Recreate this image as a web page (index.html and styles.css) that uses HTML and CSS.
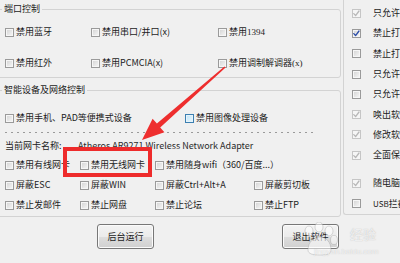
FILE: index.html
```html
<!DOCTYPE html>
<html lang="zh-CN">
<head>
<meta charset="utf-8">
<link rel="stylesheet" href="styles.css">
</head>
<body>
<div class="window">
  <div class="left">
    <fieldset class="group g1">
      <legend>端口控制</legend>
      <div class="grid1">
        <div class="cb"><span class="box"></span>禁用蓝牙</div>
        <div class="cb"><span class="box"></span>禁用串口/并口(x)</div>
        <div class="cb"><span class="box"></span>禁用<span class="serif">1394</span></div>
        <div class="cb"><span class="box"></span>禁用红外</div>
        <div class="cb"><span class="box"></span>禁用PCMCIA(x)</div>
        <div class="cb"><span class="box"></span>禁用调制解调器<span class="serif">(x)</span></div>
      </div>
    </fieldset>
    <fieldset class="group g2">
      <legend>智能设备及网络控制</legend>
      <div class="devices">
        <div class="cb"><span class="box"></span>禁用手机、PAD等便携式设备</div>
        <div class="cb"><span class="box hover"></span>禁用图像处理设备</div>
      </div>
      <div class="dots"></div>
      <div class="nic"><span class="nic-label">当前网卡名称:</span><span class="nic-name">Atheros AR9271 Wireless Network Adapter</span></div>
      <div class="grid2">
        <div class="cb"><span class="box"></span>禁用有线网卡</div>
        <div class="cb"><span class="box"></span>禁用无线网卡</div>
        <div class="cb"><span class="box"></span>禁用随身wifi（360/百度...）</div>
        <div class="cb empty"></div>
        <div class="cb"><span class="box"></span>屏蔽ESC</div>
        <div class="cb"><span class="box"></span>屏蔽WIN</div>
        <div class="cb"><span class="box"></span>屏蔽Ctrl+Alt+A</div>
        <div class="cb"><span class="box"></span>屏蔽剪切板</div>
        <div class="cb"><span class="box"></span>禁止发邮件</div>
        <div class="cb"><span class="box"></span>禁止网盘</div>
        <div class="cb"><span class="box"></span>禁止论坛</div>
        <div class="cb"><span class="box"></span>禁止FTP</div>
      </div>
    </fieldset>
    <div class="buttons">
      <button class="btn">后台运行</button>
      <button class="btn">退出软件</button>
    </div>
  </div>
  <div class="right">
    <div class="cb"><span class="box dis"><svg viewBox="0 0 9 9"><path d="M1.8 4.6 L3.6 6.6 L7 2"/></svg></span>只允许指定U盘</div>
    <div class="cb"><span class="box on"><svg viewBox="0 0 9 9"><path d="M1.8 4.6 L3.6 6.6 L7 2"/></svg></span>禁止打印机</div>
    <div class="cb"><span class="box"></span>禁止打开网页</div>
    <div class="cb"><span class="box"></span>只允许访问</div>
    <div class="cb"><span class="box"></span>只允许运行</div>
    <div class="cb"><span class="box dis"><svg viewBox="0 0 9 9"><path d="M1.8 4.6 L3.6 6.6 L7 2"/></svg></span>唤出软件</div>
    <div class="cb"><span class="box dis"><svg viewBox="0 0 9 9"><path d="M1.8 4.6 L3.6 6.6 L7 2"/></svg></span>修改软件</div>
    <div class="cb"><span class="box dis"><svg viewBox="0 0 9 9"><path d="M1.8 4.6 L3.6 6.6 L7 2"/></svg></span>全面保护</div>
    <div class="cb gap"><span class="box dis"><svg viewBox="0 0 9 9"><path d="M1.8 4.6 L3.6 6.6 L7 2"/></svg></span>随电脑启动</div>
    <div class="cb"><span class="box"></span><span class="usb">USB</span>拦截</div>
  </div>
</div>

<div class="redbox"></div>
<svg class="arrow" viewBox="0 0 400 263" width="400" height="263">
  <polygon points="225.6,67.6 160.2,127.4 164.4,132.3 142,140 152.6,118.7 156.9,123.6 224.4,66.4"/>
</svg>

<div class="watermark">
  <svg class="paw" viewBox="0 0 40 34" width="40" height="34">
    <ellipse cx="9" cy="9" rx="4" ry="5"/>
    <ellipse cx="19" cy="5" rx="4" ry="5"/>
    <ellipse cx="29" cy="9" rx="4" ry="5"/>
    <ellipse cx="34" cy="18" rx="3.5" ry="4.5"/>
    <path d="M8 28 C8 20 14 15 20 15 C26 15 31 20 31 28 C31 32 27 33 20 33 C13 33 8 32 8 28 Z"/>
  </svg>
  <span class="wm-text">经验</span>
  <span class="wm-url">jingyan.baidu.com</span>
</div>
</body>
</html>
```
FILE: styles.css
```css
* { box-sizing: border-box; }
html, body { margin: 0; padding: 0; }
body {
  width: 400px;
  height: 263px;
  overflow: hidden;
  position: relative;
  background: #f0f0f0;
  font-family: "Noto Sans CJK SC", "Microsoft YaHei", sans-serif;
  font-size: 9px;
  color: #1c1c1c;
}
.window { display: flex; align-items: flex-start; }
.left { width: 344px; margin-left: -3px; flex: none; }

.group {
  margin: 0;
  min-width: 0;
  border: 1px solid #d3d3d3;
  border-radius: 3px;
  padding: 0 0 0 7px;
}
.group legend {
  padding: 0 2px;
  margin-left: -3px;
  height: 12px;
  line-height: 12px;
  font-size: 9px;
}
.g1 { margin-top: 3px; padding-top: 7px; padding-bottom: 4px; }
.g2 { margin-top: 6px; padding-top: 12px; padding-bottom: 1px; }

.cb {
  display: flex;
  align-items: center;
  height: 20px;
  line-height: 12px;
  white-space: nowrap;
}
.box {
  width: 9px;
  height: 9px;
  flex: none;
  margin-right: 2px;
  border: 1px solid #9a9a9a;
  background: linear-gradient(135deg, #d2d2d2, #f8f8f8);
  box-shadow: inset 0 0 0 1px #f6f6f6;
  display: flex;
  align-items: center;
  justify-content: center;
}
.box svg { width: 9px; height: 9px; flex: none; }
.box path { fill: none; stroke-width: 1.3; stroke-linecap: round; stroke-linejoin: round; }
.box.on path { stroke: #2b4da8; }
.box.dis { border-color: #c6c6c6; background: #f6f6f6; box-shadow: none; }
.box.dis path { stroke: #b8b8b8; }
.box.hover {
  border-color: #3c7fb1;
  background: linear-gradient(135deg, #bfe4f8, #eaf7fd);
  box-shadow: inset 0 0 0 1px #e6f4fb;
}
.serif { font-family: "Liberation Serif", "DejaVu Serif", serif; }

.grid1 {
  display: grid;
  grid-template-columns: 86px 127px auto;
  grid-template-rows: 20px 20px;
  row-gap: 11px;
}
.devices { display: grid; grid-template-columns: 180px auto; }
.dots {
  width: 308px;
  height: 1px;
  margin: 4px 0 2px;
  background: repeating-linear-gradient(to right, #9a9a9a 0 2px, transparent 2px 6px);
}
.nic { display: flex; align-items: center; height: 20px; white-space: nowrap; }
.nic-label { width: 73px; flex: none; }
.nic-name { color: #2a2a2a; }
.grid2 {
  display: grid;
  grid-template-columns: 75px 75px 99px auto;
  grid-template-rows: repeat(3, 20px);
}

.buttons { display: flex; gap: 128px; padding-left: 100px; margin-top: 7px; }
.btn {
  width: 57px;
  height: 25px;
  padding: 0;
  border: 1px solid #777;
  border-radius: 3px;
  background: linear-gradient(#f3f3f3 0, #ebebeb 50%, #dedede 50%, #d0d0d0 100%);
  box-shadow: inset 0 0 0 1px #fbfbfb;
  font: inherit;
  color: #1c1c1c;
}

.right {
  flex: 1;
  min-width: 0;
  margin-left: 2px;
  height: 215px;
  border-left: 1px solid #d3d3d3;
  border-bottom: 1px solid #d3d3d3;
  border-bottom-left-radius: 3px;
  padding: 3px 0 0 8px;
  overflow: hidden;
}
.right .cb { height: 20.3px; }
.right .box { margin-right: 12px; }
.right .gap { margin-top: 7.7px; }
.usb { font-size: 8px; }

.redbox {
  position: absolute;
  left: 63px;
  top: 147px;
  width: 89px;
  height: 30px;
  border: 4px solid #ee2b2b;
}
.arrow { position: absolute; left: 0; top: 0; pointer-events: none; }
.arrow polygon { fill: #ee2e2e; }

.watermark { position: absolute; left: 300px; top: 220px; width: 100px; height: 43px; pointer-events: none; }
.paw { position: absolute; left: 0; top: 2px; }
.paw ellipse, .paw path { fill: rgba(255,255,255,0.55); stroke: rgba(150,150,150,0.35); stroke-width: 1; }
.wm-text {
  position: absolute;
  left: 50px;
  top: 6px;
  font-size: 13px;
  line-height: 16px;
  color: rgba(255,255,255,0.75);
  text-shadow: 0 0 1px rgba(120,120,120,0.5);
}
.wm-url {
  position: absolute;
  left: 14px;
  top: 27px;
  font-family: "Liberation Sans", sans-serif;
  font-size: 8px;
  line-height: 10px;
  color: rgba(255,255,255,0.7);
  text-shadow: 0 0 1px rgba(120,120,120,0.4);
}
```
